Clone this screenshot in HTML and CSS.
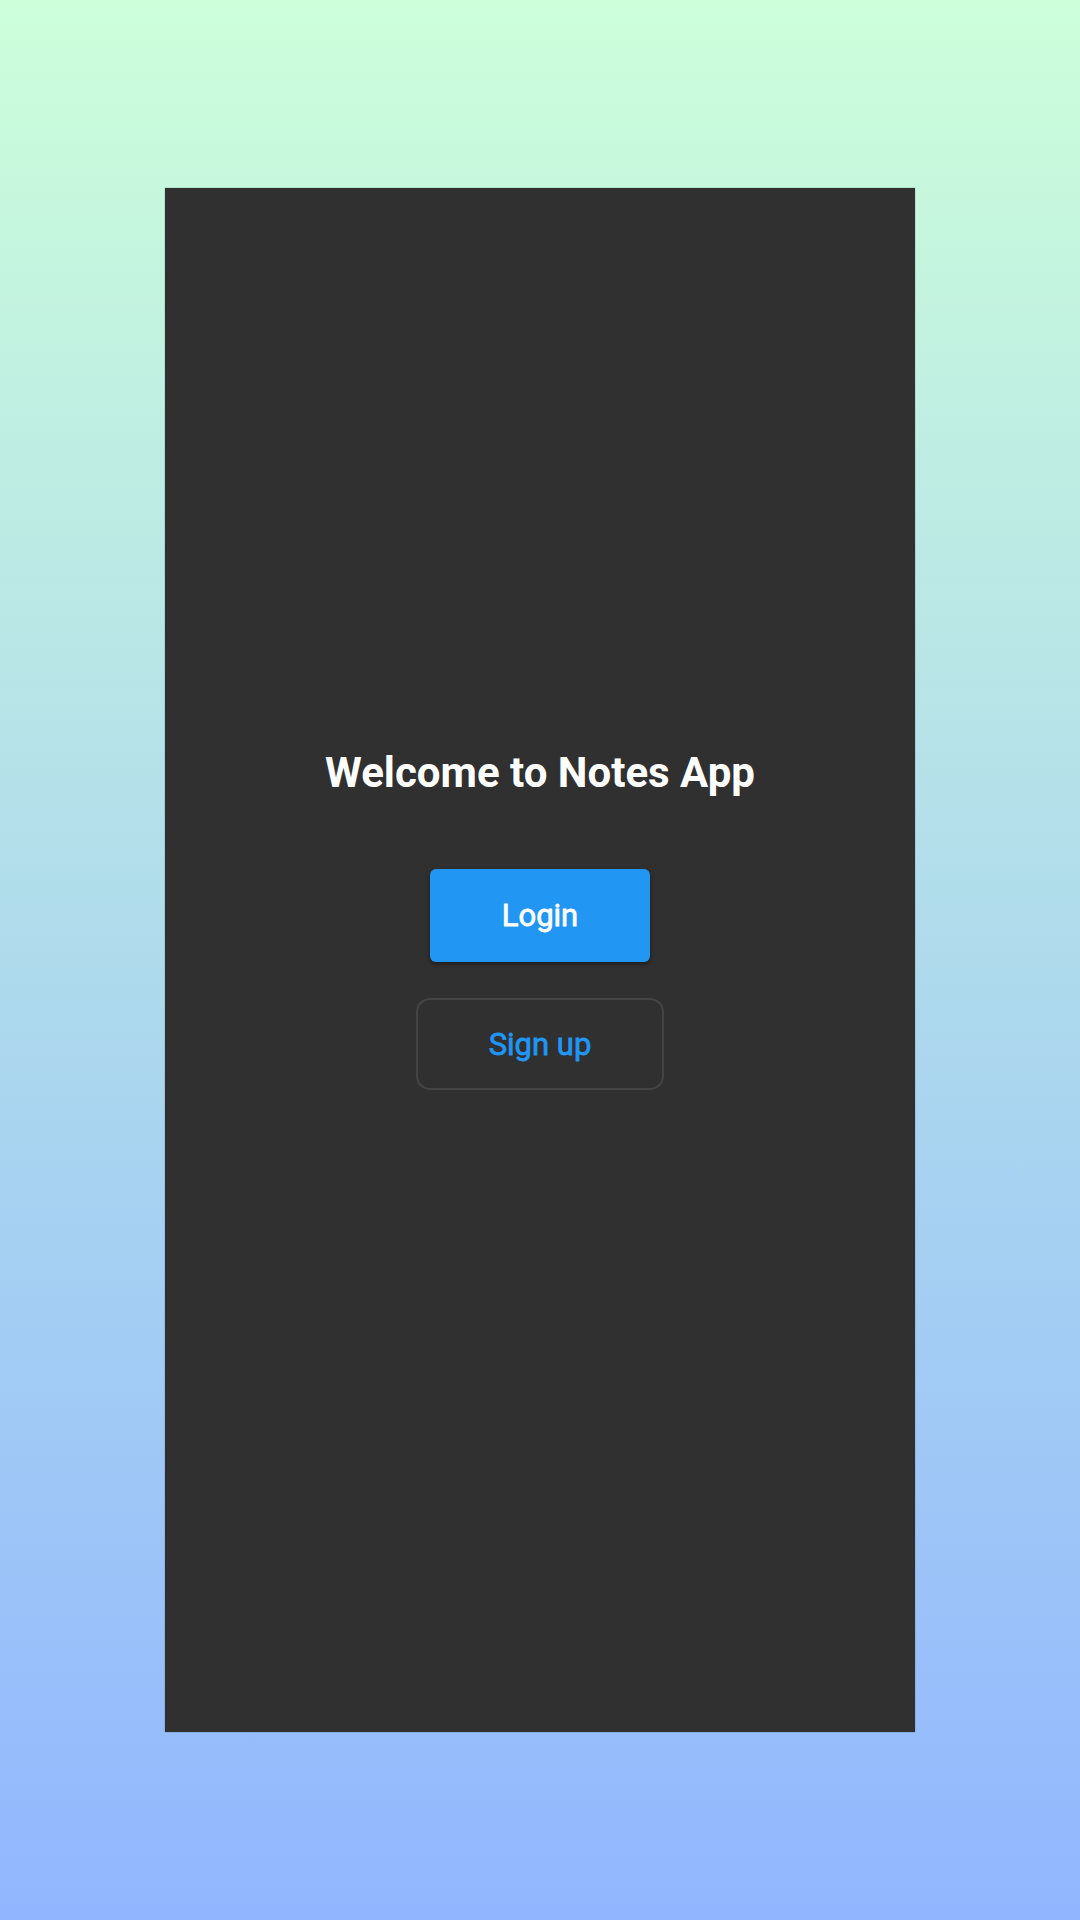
FILE: index.html
```html
<!DOCTYPE html>
<html>
<head>
<meta charset="utf-8">
<link rel="stylesheet" href="styles.css">
</head>
<body>
<div class="stage">
  <main class="panel">
    <div class="content">
      <h1 class="title">Welcome to Notes App</h1>
      <button class="btn btn-login">Login</button>
      <button class="btn btn-signup">Sign up</button>
    </div>
  </main>
</div>
</body>
</html>
```
FILE: styles.css
```css
* { box-sizing: border-box; }
html, body { margin: 0; padding: 0; }
body {
  width: 1080px;
  height: 1920px;
  background: linear-gradient(180deg, #ccffda 0%, #91b6ff 100%);
  font-family: Roboto, "Noto Sans", sans-serif;
}
.stage {
  height: 1920px;
  padding-top: 188px;
  display: flex;
  justify-content: center;
}
.panel {
  width: 750px;
  height: 1544px;
  background: #303030;
  box-shadow: 0 0 1px rgba(0,0,0,0.5);
  display: flex;
  align-items: center;
  justify-content: center;
  padding-bottom: 82px;
}
.content {
  display: flex;
  flex-direction: column;
  align-items: center;
}
.title {
  margin: 0;
  font-size: 42px;
  line-height: 50px;
  font-weight: 700;
  color: #ffffff;
}
.btn {
  font-family: Roboto, "Noto Sans", sans-serif;
  font-size: 31px;
  font-weight: 400;
  cursor: pointer;
  -webkit-text-stroke: 0.8px currentColor;
}
.btn-login {
  margin-top: 71px;
  width: 220px;
  height: 93px;
  border: none;
  border-radius: 6px;
  background: #2196f3;
  color: #ffffff;
  box-shadow: 0 2px 4px rgba(0,0,0,0.45);
}
.btn-signup {
  margin-top: 36px;
  width: 248px;
  height: 92px;
  border: 2px solid #444444;
  border-radius: 14px;
  background: transparent;
  color: #2196f3;
}
```
